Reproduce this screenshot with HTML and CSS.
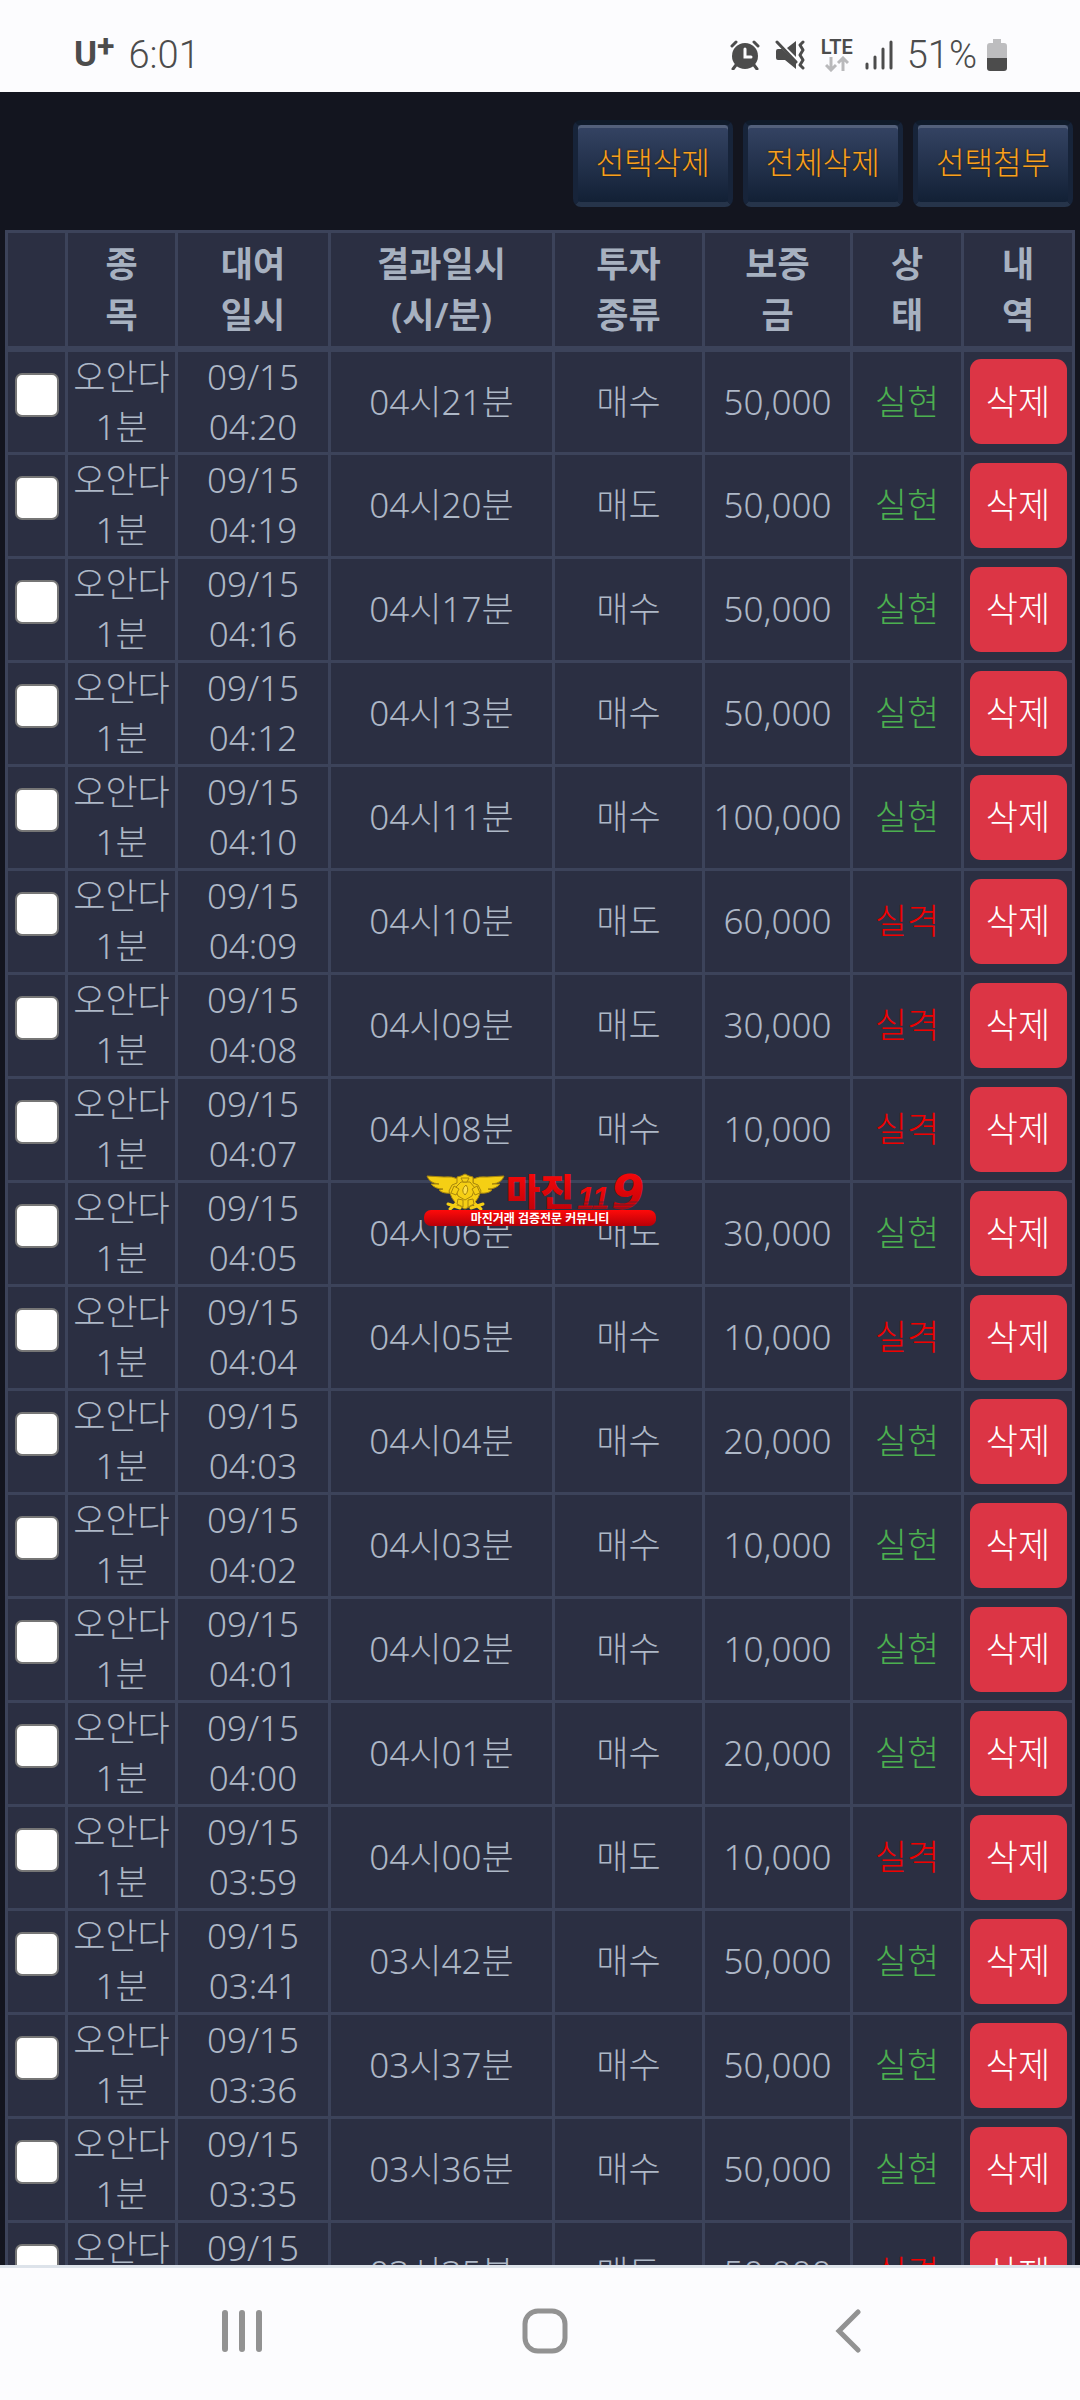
FILE: index.html
```html
<!DOCTYPE html>
<html lang="ko">
<head>
    <meta charset="UTF-8">
    <meta name="viewport" content="width=device-width, initial-scale=1.0">
    <title>거래내역</title>
    <link rel="stylesheet" href="styles.css">
</head>
<body>
    <header class="status-bar">
        <div class="status-left">
            <span class="carrier">U<sup>+</sup></span>
            <span class="clock">6:01</span>
        </div>
        <div class="status-right">
            <svg class="icon-alarm" width="30" height="30" viewBox="0 0 30 30">
                <circle cx="15" cy="16" r="13" fill="#4c4c4c"/>
                <path d="M2 6l4-4M28 6l-4-4M6 25l-3 4M24 25l3 4" stroke="#4c4c4c" stroke-width="3" stroke-linecap="round"/>
                <path d="M15 9v8h6" fill="none" stroke="#fcfcfe" stroke-width="3" stroke-linecap="round"/>
            </svg>
            <svg class="icon-mute" width="30" height="30" viewBox="0 0 30 30">
                <path d="M3 9h4l14 14v6l-11-9H3q-2 0-2-2v-7q0-2 2-2z" fill="#4c4c4c"/>
                <path d="M12 8l9-7v16z" fill="#4c4c4c"/>
                <path d="M2 2l19 20" stroke="#4c4c4c" stroke-width="3" stroke-linecap="round"/>
                <path d="M28 2l-3 3 3 5-3 5 3 5-3 5 3 3" fill="none" stroke="#4c4c4c" stroke-width="3" stroke-linecap="round" stroke-linejoin="round"/>
            </svg>
            <div class="network">
                <span>LTE</span>
                <svg width="24" height="16" viewBox="0 0 24 16">
                    <path d="M6 1v13M1 9l5 5 5-5M18 15V2M13 7l5-5 5 5" fill="none" stroke="#b9b9bb" stroke-width="3"/>
                </svg>
            </div>
            <svg class="icon-signal" width="28" height="30" viewBox="0 0 28 30">
                <path d="M2 24v4M10 17v11M18 9v19M26 2v26" stroke="#4c4c4c" stroke-width="3" stroke-linecap="round"/>
            </svg>
            <span class="battery-text">51%</span>
            <svg class="icon-battery" width="22" height="32" viewBox="0 0 22 32">
                <path d="M7 0h8v4h3q3 0 3 3v12H1V7q0-3 3-3h3z" fill="#bdbdbf"/>
                <path d="M1 19h20v10q0 3-3 3H4q-3 0-3-3z" fill="#4c4c4c"/>
            </svg>
        </div>
    </header>

    <main class="content">
        <div class="toolbar">
            <button type="button" class="btn-dark">선택삭제</button>
            <button type="button" class="btn-dark">전체삭제</button>
            <button type="button" class="btn-dark">선택첨부</button>
        </div>

        <table class="history">
            <colgroup>
                <col class="col-check">
                <col class="col-item">
                <col class="col-date">
                <col class="col-result">
                <col class="col-type">
                <col class="col-amount">
                <col class="col-state">
                <col class="col-action">
            </colgroup>
            <thead>
                <tr>
                    <th></th>
                    <th>종<br>목</th>
                    <th>대여<br>일시</th>
                    <th>결과일시<br>(시/분)</th>
                    <th>투자<br>종류</th>
                    <th>보증<br>금</th>
                    <th>상<br>태</th>
                    <th>내<br>역</th>
                </tr>
            </thead>
            <tbody>
                <tr>
                    <td><input type="checkbox" aria-label="04시21분 선택"></td><td>오안다<br>1분</td><td>09/15<br>04:20</td>
                    <td>04시21분</td><td>매수</td><td>50,000</td><td class="win">실현</td><td><button type="button" class="btn-delete">삭제</button></td>
                </tr>
                <tr>
                    <td><input type="checkbox" aria-label="04시20분 선택"></td><td>오안다<br>1분</td><td>09/15<br>04:19</td>
                    <td>04시20분</td><td>매도</td><td>50,000</td><td class="win">실현</td><td><button type="button" class="btn-delete">삭제</button></td>
                </tr>
                <tr>
                    <td><input type="checkbox" aria-label="04시17분 선택"></td><td>오안다<br>1분</td><td>09/15<br>04:16</td>
                    <td>04시17분</td><td>매수</td><td>50,000</td><td class="win">실현</td><td><button type="button" class="btn-delete">삭제</button></td>
                </tr>
                <tr>
                    <td><input type="checkbox" aria-label="04시13분 선택"></td><td>오안다<br>1분</td><td>09/15<br>04:12</td>
                    <td>04시13분</td><td>매수</td><td>50,000</td><td class="win">실현</td><td><button type="button" class="btn-delete">삭제</button></td>
                </tr>
                <tr>
                    <td><input type="checkbox" aria-label="04시11분 선택"></td><td>오안다<br>1분</td><td>09/15<br>04:10</td>
                    <td>04시11분</td><td>매수</td><td>100,000</td><td class="win">실현</td><td><button type="button" class="btn-delete">삭제</button></td>
                </tr>
                <tr>
                    <td><input type="checkbox" aria-label="04시10분 선택"></td><td>오안다<br>1분</td><td>09/15<br>04:09</td>
                    <td>04시10분</td><td>매도</td><td>60,000</td><td class="lose">실격</td><td><button type="button" class="btn-delete">삭제</button></td>
                </tr>
                <tr>
                    <td><input type="checkbox" aria-label="04시09분 선택"></td><td>오안다<br>1분</td><td>09/15<br>04:08</td>
                    <td>04시09분</td><td>매도</td><td>30,000</td><td class="lose">실격</td><td><button type="button" class="btn-delete">삭제</button></td>
                </tr>
                <tr>
                    <td><input type="checkbox" aria-label="04시08분 선택"></td><td>오안다<br>1분</td><td>09/15<br>04:07</td>
                    <td>04시08분</td><td>매수</td><td>10,000</td><td class="lose">실격</td><td><button type="button" class="btn-delete">삭제</button></td>
                </tr>
                <tr>
                    <td><input type="checkbox" aria-label="04시06분 선택"></td><td>오안다<br>1분</td><td>09/15<br>04:05</td>
                    <td>04시06분</td><td>매도</td><td>30,000</td><td class="win">실현</td><td><button type="button" class="btn-delete">삭제</button></td>
                </tr>
                <tr>
                    <td><input type="checkbox" aria-label="04시05분 선택"></td><td>오안다<br>1분</td><td>09/15<br>04:04</td>
                    <td>04시05분</td><td>매수</td><td>10,000</td><td class="lose">실격</td><td><button type="button" class="btn-delete">삭제</button></td>
                </tr>
                <tr>
                    <td><input type="checkbox" aria-label="04시04분 선택"></td><td>오안다<br>1분</td><td>09/15<br>04:03</td>
                    <td>04시04분</td><td>매수</td><td>20,000</td><td class="win">실현</td><td><button type="button" class="btn-delete">삭제</button></td>
                </tr>
                <tr>
                    <td><input type="checkbox" aria-label="04시03분 선택"></td><td>오안다<br>1분</td><td>09/15<br>04:02</td>
                    <td>04시03분</td><td>매수</td><td>10,000</td><td class="win">실현</td><td><button type="button" class="btn-delete">삭제</button></td>
                </tr>
                <tr>
                    <td><input type="checkbox" aria-label="04시02분 선택"></td><td>오안다<br>1분</td><td>09/15<br>04:01</td>
                    <td>04시02분</td><td>매수</td><td>10,000</td><td class="win">실현</td><td><button type="button" class="btn-delete">삭제</button></td>
                </tr>
                <tr>
                    <td><input type="checkbox" aria-label="04시01분 선택"></td><td>오안다<br>1분</td><td>09/15<br>04:00</td>
                    <td>04시01분</td><td>매수</td><td>20,000</td><td class="win">실현</td><td><button type="button" class="btn-delete">삭제</button></td>
                </tr>
                <tr>
                    <td><input type="checkbox" aria-label="04시00분 선택"></td><td>오안다<br>1분</td><td>09/15<br>03:59</td>
                    <td>04시00분</td><td>매도</td><td>10,000</td><td class="lose">실격</td><td><button type="button" class="btn-delete">삭제</button></td>
                </tr>
                <tr>
                    <td><input type="checkbox" aria-label="03시42분 선택"></td><td>오안다<br>1분</td><td>09/15<br>03:41</td>
                    <td>03시42분</td><td>매수</td><td>50,000</td><td class="win">실현</td><td><button type="button" class="btn-delete">삭제</button></td>
                </tr>
                <tr>
                    <td><input type="checkbox" aria-label="03시37분 선택"></td><td>오안다<br>1분</td><td>09/15<br>03:36</td>
                    <td>03시37분</td><td>매수</td><td>50,000</td><td class="win">실현</td><td><button type="button" class="btn-delete">삭제</button></td>
                </tr>
                <tr>
                    <td><input type="checkbox" aria-label="03시36분 선택"></td><td>오안다<br>1분</td><td>09/15<br>03:35</td>
                    <td>03시36분</td><td>매수</td><td>50,000</td><td class="win">실현</td><td><button type="button" class="btn-delete">삭제</button></td>
                </tr>
                <tr>
                    <td><input type="checkbox" aria-label="03시35분 선택"></td><td>오안다<br>1분</td><td>09/15<br>03:34</td>
                    <td>03시35분</td><td>매도</td><td>50,000</td><td class="lose">실격</td><td><button type="button" class="btn-delete">삭제</button></td>
                </tr>
            </tbody>
        </table>
    </main>

    <nav class="nav-bar">
        <button type="button" aria-label="최근 앱">
            <svg width="42" height="44" viewBox="0 0 42 44">
                <path d="M4 4v36M21 4v36M38 4v36" stroke="#929292" stroke-width="6" stroke-linecap="round"/>
            </svg>
        </button>
        <button type="button" aria-label="홈">
            <svg width="46" height="46" viewBox="0 0 46 46">
                <rect x="3" y="3" width="40" height="40" rx="13" fill="none" stroke="#929292" stroke-width="5"/>
            </svg>
        </button>
        <button type="button" aria-label="뒤로">
            <svg width="26" height="44" viewBox="0 0 26 44">
                <path d="M23 3L4 22l19 19" fill="none" stroke="#929292" stroke-width="5" stroke-linecap="round"/>
            </svg>
        </button>
    </nav>

    <svg class="watermark" width="232" height="54" viewBox="0 0 232 54">
        <defs>
            <linearGradient id="red" x1="0" y1="0" x2="0" y2="1">
                <stop offset="0" stop-color="#ff0a0a"/>
                <stop offset="1" stop-color="#b80008"/>
            </linearGradient>
        </defs>
        <!-- emblem -->
        <g fill="#f5cf14" stroke="#a8860c" stroke-width="1">
            <path d="M34 6Q28 3 20 4L3 3q2 7 12 8l-8 0q4 5 12 5l-4 1q4 4 12 3l7-3z"/>
            <path d="M49 6q6-3 14-2l17-1q-2 7-12 8l8 0q-4 5-12 5l4 1q-4 4-12 3l-7-3z"/>
            <path d="M41 1l4 2 4 1v6l5 2 3 6-3 7-5 7-8 4-8-4-5-7-3-7 3-6 5-2V4l4-1z"/>
            <path d="M24 31l12 4M59 31l-12 4M26 36l7-6M57 36l-7-6" stroke="#f5cf14" stroke-width="3" stroke-linecap="round"/>
            <path d="M37 9h9l5 6-3 8-7 4-7-4-3-8z"/>
            <path d="M37 5h8l-2 4h-4zM30 13l5 3-3 6-5-2zM53 13l-5 3 3 6 5-2zM34 26l5 1v7l-6-3zM49 26l-5 1v7l6-3z"/>
            <path d="M42 12q-6 5-1 10 5-5 1-10z" fill="#ffe14a"/>
        </g>
        <text class="mark-name" x="82" y="33" fill="url(#red)">마진</text>
        <text class="mark-eleven" x="153" y="36" fill="url(#red)">11</text>
        <text class="mark-nine" x="187" y="36" fill="url(#red)">9</text>
        <path d="M150 29h66M150 32h66M150 35h66" stroke="#2b2f42" stroke-width="1" opacity="0.6"/>
        <rect y="37" width="232" height="16" rx="7" fill="url(#red)"/>
        <text class="mark-sub" x="116" y="50" text-anchor="middle">마진거래 검증전문 커뮤니티</text>
    </svg>
</body>
</html>
```
FILE: styles.css
```css
* {
    box-sizing: border-box;
}

body {
    display: flex;
    flex-direction: column;
    height: 100vh;
    margin: 0;
    overflow: hidden;
    background-color: #13151f;
    font-family: "Noto Sans", "Noto Sans CJK KR", sans-serif;
    font-size: 35px;
    font-weight: 300;
    color: #aeb8c7;
}

button {
    padding: 0;
    border: none;
    background: none;
    font: inherit;
    cursor: pointer;
}

/* status bar */
.status-bar {
    display: flex;
    justify-content: space-between;
    flex-shrink: 0;
    height: 92px;
    padding: 18px 72px 0 74px;
    background-color: #fcfcfe;
    color: #4c4c4c;
    font-family: Roboto, sans-serif;
}

.status-left,
.status-right {
    display: flex;
    align-items: center;
}

.carrier {
    display: flex;
    margin-right: 14px;
    font-weight: 700;
    line-height: 40px;
}

.carrier sup {
    font-size: 32px;
    line-height: 22px;
}

.clock,
.battery-text {
    font-size: 38px;
}

.icon-alarm {
    margin-right: 15px;
}

.icon-mute {
    margin-right: 16px;
}

.network {
    display: flex;
    flex-direction: column;
    align-items: center;
    margin-right: 12px;
    font-size: 20px;
    font-weight: 600;
    line-height: 18px;
}

.icon-signal {
    margin-right: 14px;
}

.icon-battery {
    margin-left: 9px;
}

/* page */
.content {
    flex: 1;
    min-height: 0;
    padding: 28px 7px 0 5px;
    overflow: hidden;
}

.toolbar {
    display: flex;
    justify-content: flex-end;
    gap: 10px;
    margin-bottom: 23px;
}

.btn-dark {
    height: 87px;
    padding: 0 18px 6px;
    border: 5px solid #17243a;
    border-top-color: #101b2b;
    border-bottom-color: #26344a;
    border-radius: 8px;
    background: linear-gradient(#354464, #122035);
    box-shadow: inset 0 3px 0 #53607b;
    color: #f9a01e;
    font-size: 31px;
    text-shadow: 0 0 2px #2a1c08;
}

.history {
    width: 100%;
    table-layout: fixed;
    border-collapse: collapse;
    background-color: #2b2f42;
    text-align: center;
}

.col-check { width: 60px; }
.col-item { width: 110px; }
.col-date { width: 153px; }
.col-result { width: 224px; }
.col-type { width: 150px; }
.col-amount { width: 148px; }
.col-state { width: 111px; }
.col-action { width: 111px; }

.history th,
.history td {
    padding: 0;
    border: 3px solid #3c435a;
    vertical-align: middle;
}

.history th {
    height: 117px;
    border-bottom-width: 6px;
    color: #a7b1c0;
    font-weight: 600;
    line-height: 51px;
}

.history td {
    height: 104px;
    line-height: 50px;
}

.history input {
    display: block;
    width: 44px;
    height: 44px;
    margin: 0 auto 14px;
    appearance: none;
    border: 2px solid #767676;
    border-radius: 7px;
    background-color: #fff;
}

.history input:checked {
    background-color: #0075ff;
}

.history .win {
    color: #4caf50;
}

.history .lose {
    color: #f00000;
}

.btn-delete {
    width: 97px;
    height: 85px;
    border-radius: 11px;
    background-color: #dc3545;
    color: #fff;
    vertical-align: middle;
}

/* bottom navigation */
.nav-bar {
    display: flex;
    justify-content: center;
    gap: 3px;
    flex-shrink: 0;
    height: 135px;
    padding: 0 0 6px 10px;
    border-top: 3px solid #dde3ea;
    background-color: #fcfcfe;
}

.nav-bar button {
    display: flex;
    flex: 0 0 28%;
    align-items: center;
    justify-content: center;
}

/* logo over the page */
.watermark {
    position: absolute;
    top: 50%;
    left: 50%;
    transform: translate(-50%, -50%);
}

.mark-name {
    font-size: 37px;
    font-weight: 900;
}

.mark-eleven,
.mark-nine {
    font-style: italic;
    font-weight: 700;
}

.mark-eleven {
    font-family: "Liberation Sans", sans-serif;
    font-size: 31px;
}

.mark-nine {
    font-family: "DejaVu Sans", sans-serif;
    font-size: 48px;
}

.mark-sub {
    font-size: 12px;
    font-weight: 700;
    fill: #fff;
}
```
